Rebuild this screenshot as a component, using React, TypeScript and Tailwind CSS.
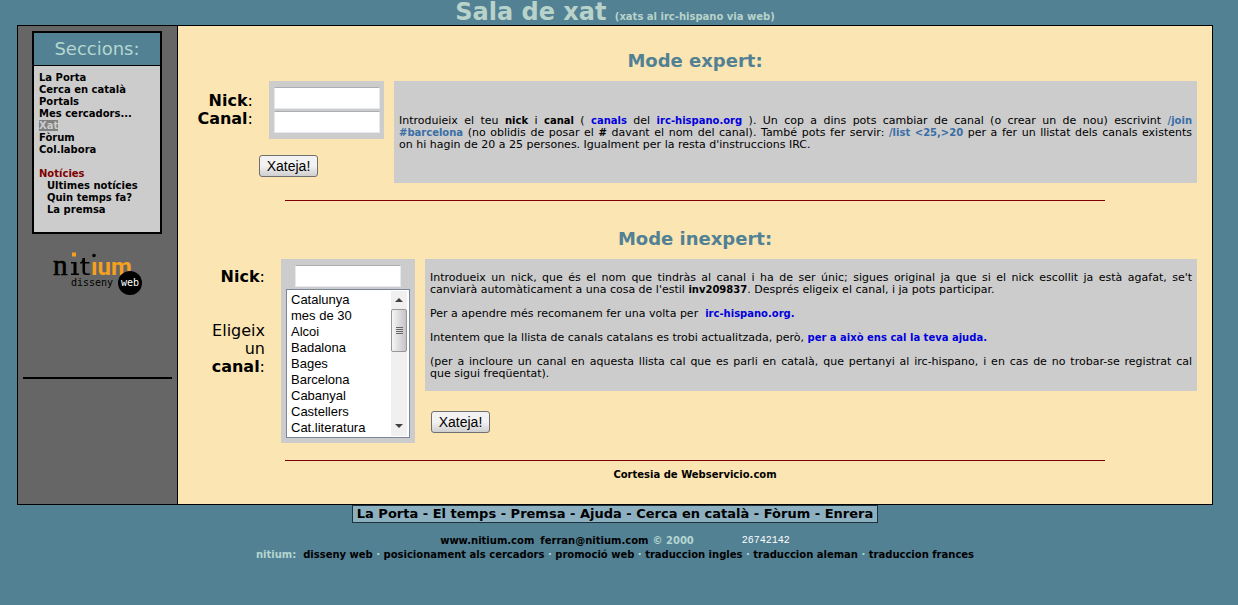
import type { ReactNode } from "react";

const channels = [
  "Catalunya",
  "mes de 30",
  "Alcoi",
  "Badalona",
  "Bages",
  "Barcelona",
  "Cabanyal",
  "Castellers",
  "Cat.literatura",
];

const sections = ["La Porta", "Cerca en català", "Portals", "Mes cercadors...", "Xat", "Fòrum", "Col.labora"];
const news = ["Ultimes notícies", "Quin temps fa?", "La premsa"];
const footerNav = ["La Porta", "El temps", "Premsa", "Ajuda", "Cerca en català", "Fòrum", "Enrera"];
const services = [
  "disseny web",
  "posicionament als cercadors",
  "promoció web",
  "traduccion ingles",
  "traduccion aleman",
  "traduccion frances",
];

function Logo() {
  return (
    <svg viewBox="0 0 92 46" className="h-[46px] w-[92px]" role="img" aria-label="nitium disseny web">
      <text x="0" y="25" fontFamily="Liberation Serif, serif" fontSize="29" stroke="#000" strokeWidth="0.6" fill="#000">
        n
      </text>
      <path d="M18 12h5.500v11.500h2.500v1.500h-8v-1.500h2.500v-10h-2.500z" fill="#000" />
      <rect x="19" y="2.500" width="4" height="4" fill="#f5a01e" />
      <path d="M29.500 8h2.500v4h4.500v1.500h-4.500v8q0 2 2 2h3v1q-7.500 2-7.500-3v-8h-2.500v-1q2.500-1 2.500-4.500z" fill="#000" />
      <text x="38" y="25" fontFamily="Roboto, sans-serif" fontWeight="700" fontSize="24" fill="#f5a01e">
        ıum
      </text>
      <circle cx="41" cy="5.500" r="1.800" fill="#000" />
      <text x="18" y="36" fontFamily="DejaVu Sans Mono, monospace" fontSize="10" fill="#000">
        disseny
      </text>
      <circle cx="77" cy="33" r="12" fill="#000" />
      <text x="77" y="36" textAnchor="middle" fontFamily="DejaVu Sans Mono, monospace" fontSize="10" fill="#fff">
        web
      </text>
    </svg>
  );
}

function TextBox({ id }: { id: string }) {
  return (
    <input
      id={id}
      type="text"
      className="block h-[22px] w-[106px] border border-[#e3e9ef] border-t-[#abadb3] bg-white px-1 font-['Liberation_Sans',sans-serif] text-sm outline-none"
    />
  );
}

function ChatButton() {
  return (
    <button
      type="button"
      className="block h-[22px] w-[59px] rounded-[3px] border border-[#707070] bg-linear-to-b from-[#f2f2f2] from-50% to-[#cfcfcf] text-center font-['Liberation_Sans',sans-serif] text-[14px] leading-[18px] text-black"
    >
      Xateja!
    </button>
  );
}

function Line({ children }: { children: ReactNode }) {
  return <span className="block [text-align-last:justify]">{children}</span>;
}

function Strong({ children }: { children: ReactNode }) {
  return <b className="text-[10px]">{children}</b>;
}

function Blue({ children }: { children: ReactNode }) {
  return (
    <a href="#" className="text-[10px] font-bold text-[#0000dd]">
      {children}
    </a>
  );
}

function Code({ children }: { children: ReactNode }) {
  return <b className="text-[10px] text-[#3a6ea5]">{children}</b>;
}

function Scrollbar() {
  return (
    <div aria-hidden="true" className="flex w-[16px] flex-col bg-[#f0f0f0]">
      <svg viewBox="0 0 16 16" className="h-[18px] w-4">
        <path d="M4 10L8 6L12 10z" fill="#404040" />
      </svg>
      <div className="flex h-[43px] flex-col items-center justify-center gap-px rounded-[2px] border border-[#979797] bg-linear-to-r from-[#f5f5f5] to-[#c5c5c8]">
        <span className="h-px w-[7px] bg-[#666]" />
        <span className="h-px w-[7px] bg-[#666]" />
        <span className="h-px w-[7px] bg-[#666]" />
        <span className="h-px w-[7px] bg-[#666]" />
      </div>
      <svg viewBox="0 0 16 16" className="mt-auto h-[18px] w-4">
        <path d="M4 5L8 9L12 5z" fill="#404040" />
      </svg>
    </div>
  );
}

function Sidebar() {
  return (
    <aside className="w-[160px] shrink-0 border-r border-black bg-[#666666]">
      <nav className="mr-[15px] ml-[14px] mt-[5px] h-[203px] border-2 border-black bg-[#cccccc]">
        <h2 className="border-b border-black bg-[#528194] py-1 text-center text-[18px] leading-6 text-[#b5d6d0]">
          Seccions:
        </h2>
        <ul className="px-[5px] pt-[6px] text-[10px] leading-[12px] font-bold text-black">
          {sections.map((s) => (
            <li key={s}>
              {s === "Xat" ? (
                <a href="#" className="bg-[#808080] text-[#cccccc]">
                  {s}
                </a>
              ) : (
                <a href="#">{s}</a>
              )}
            </li>
          ))}
          <li className="pt-3 text-[#800000]">Notícies</li>
          {news.map((s) => (
            <li key={s} className="pl-2">
              <a href="#">{s}</a>
            </li>
          ))}
        </ul>
      </nav>
      <a href="#" className="mt-[16px] ml-[35px] block w-[92px]">
        <Logo />
      </a>
      <hr className="mx-[5px] mt-[81px] border-t-2 border-black" />
    </aside>
  );
}

export default function App() {
  return (
    <div className="min-h-screen bg-[#528194] pr-[25px] pl-[17px] font-['DejaVu_Sans',sans-serif] text-black">
      <h1 className="h-[25px] text-center text-[24px] leading-6 font-bold text-[#b9d3cb]">
        Sala de xat <small className="text-[10px]">(xats al irc-hispano via web)</small>
      </h1>

      <div className="flex min-h-[480px] border border-black bg-[#fbe5b3]">
        <Sidebar />
        <main className="min-w-0 flex-1 px-[5px] pt-6">
          <h2 className="text-center text-[18px] leading-[22px] font-bold text-[#528194]">Mode expert:</h2>
          <form className="mt-[9px] flex pr-[10px]">
            <div className="w-[201px] shrink-0">
              <div className="flex justify-end">
                <div className="mt-[11px] mr-4 flex flex-col text-right text-[16px] leading-[18px]">
                  <label htmlFor="nick1">
                    <b>Nick</b>:
                  </label>
                  <label htmlFor="canal1">
                    <b>Canal</b>:
                  </label>
                </div>
                <div className="flex h-[58px] w-[115px] flex-col items-center gap-[2px] bg-[#cccccc] pt-[6px]">
                  <TextBox id="nick1" />
                  <TextBox id="canal1" />
                </div>
              </div>
              <div className="mt-4 ml-[76px]">
                <ChatButton />
              </div>
            </div>
            <div className="ml-[10px] flex min-h-[102px] flex-1 items-center bg-[#cccccc] px-[5px] pt-[2px]">
              <p className="w-full text-justify text-[11px] leading-[12px]">
                <Line>
                  Introduieix el teu <Strong>nick</Strong> i <Strong>canal</Strong> ( <Blue>canals</Blue> del{" "}
                  <Blue>irc-hispano.org</Blue> ). Un cop a dins pots cambiar de canal (o crear un de nou) escrivint{" "}
                  <Code>/join</Code>
                </Line>
                <Line>
                  <Code>#barcelona</Code> (no oblidis de posar el <Strong>#</Strong> davant el nom del canal). També pots
                  fer servir: <Code>/list &lt;25,&gt;20</Code> per a fer un llistat dels canals existents
                </Line>
                on hi hagin de 20 a 25 persones. Igualment per la resta d'instruccions IRC.
              </p>
            </div>
          </form>

          <hr className="mx-auto mt-[17px] w-4/5 border-[#800000]" />

          <h2 className="mt-[27px] text-center text-[18px] leading-[22px] font-bold text-[#528194]">Mode inexpert:</h2>
          <form className="mt-[9px] flex pr-[10px]">
            <div className="mt-[9px] mr-4 ml-[12px] w-[70px] text-right text-[16px] leading-[18px]">
              <label htmlFor="nick2" className="block">
                <b>Nick</b>:
              </label>
              <label htmlFor="canal2" className="mt-9 block">
                Eligeix un <b>canal</b>:
              </label>
            </div>
            <div className="flex h-[184px] w-[134px] shrink-0 flex-col items-center gap-[2px] bg-[#cccccc] pt-[6px]">
              <TextBox id="nick2" />
              <div className="flex border border-[#7a8699] bg-white p-px pr-[2px]">
                <select
                  id="canal2"
                  size={9}
                  className="h-[145px] w-[103px] overflow-hidden bg-white pt-px font-['Liberation_Sans',sans-serif] text-[13px] outline-none"
                >
                  {channels.map((c) => (
                    <option key={c} className="h-4 min-h-0 px-[3px] py-0 leading-4">
                      {c}
                    </option>
                  ))}
                </select>
                <Scrollbar />
              </div>
            </div>
            <div className="ml-[10px] flex-1">
              <div className="flex min-h-[132px] flex-col gap-3 bg-[#cccccc] px-[5px] pt-[13px] pb-[11px] text-justify text-[11px] leading-[12px]">
                <p>
                  <Line>
                    Introdueix un nick, que és el nom que tindràs al canal i ha de ser únic; sigues original ja que si el
                    nick escollit ja està agafat, se't
                  </Line>
                  canviarà automàticament a una cosa de l'estil <Strong>inv209837</Strong>. Després eligeix el canal, i ja
                  pots participar.
                </p>
                <p>
                  Per a apendre més recomanem fer una volta per &nbsp;<Blue>irc-hispano.org.</Blue>
                </p>
                <p>
                  Intentem que la llista de canals catalans es trobi actualitzada, però,{" "}
                  <Blue>per a això ens cal la teva ajuda.</Blue>
                </p>
                <p>
                  <Line>
                    (per a incloure un canal en aquesta llista cal que es parli en català, que pertanyi al irc-hispano, i
                    en cas de no trobar-se registrat cal
                  </Line>
                  que sigui freqüentat).
                </p>
              </div>
              <div className="mt-5 ml-[6px]">
                <ChatButton />
              </div>
            </div>
          </form>

          <hr className="mx-auto mt-[17px] w-4/5 border-[#800000]" />
          <p className="mt-2 text-center text-[10px] leading-[12px] font-bold">
            <a href="#">Cortesia de Webservicio.com</a>
          </p>
        </main>
      </div>

      <footer className="flex flex-col items-center text-[10px] leading-[14px] font-bold text-[#b5d6d0]">
        <nav className="border border-[#1c333d] bg-[#8cb0c0] px-1 text-[13px] leading-4 text-black">
          {footerNav.map((f, i) => (
            <span key={f}>
              {i > 0 && " - "}
              <a href="#">{f}</a>
            </span>
          ))}
        </nav>
        <p className="mt-[11px] flex">
          <a href="#" className="mr-[6px] text-black">
            www.nitium.com
          </a>
          <a href="#" className="text-black">
            ferran@nitium.com
          </a>
          <span className="ml-1">© 2000</span>
          <span className="ml-12 font-['Liberation_Mono',monospace] font-normal text-white">26742142</span>
        </p>
        <p>
          nitium:&nbsp;{" "}
          {services.map((s, i) => (
            <span key={s}>
              {i > 0 && " · "}
              <a href="#" className="text-black">
                {s}
              </a>
            </span>
          ))}
        </p>
      </footer>
    </div>
  );
}
